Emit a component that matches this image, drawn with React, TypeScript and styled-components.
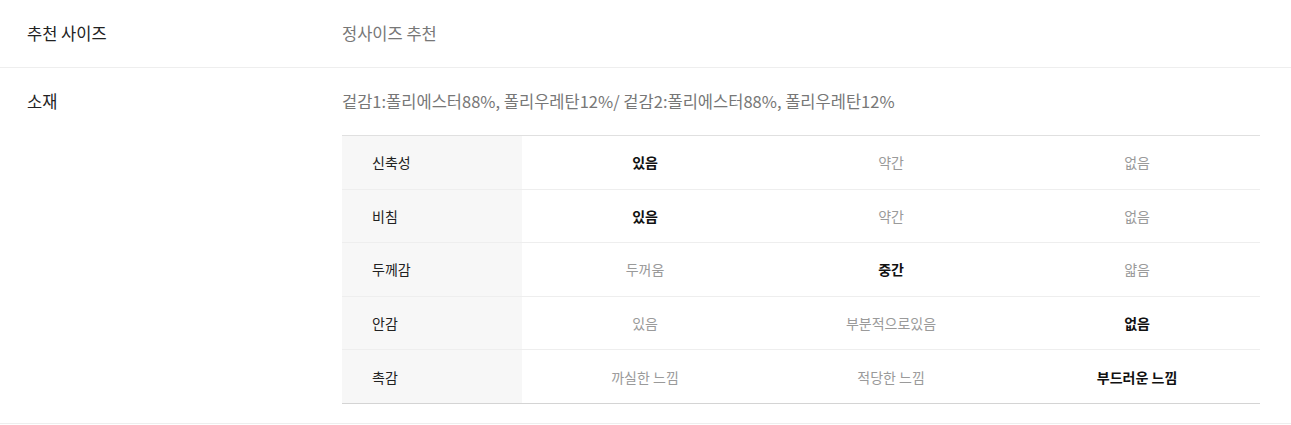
import styled, { createGlobalStyle } from "styled-components";

const GlobalStyle = createGlobalStyle`
  body {
    margin: 0;
    background: #ffffff;
    font-family: "Noto Sans CJK KR", "Noto Sans", sans-serif;
    color: #222222;
  }
`;

const Section = styled.div<{ $last?: boolean }>`
  display: flex;
  border-bottom: 1px solid #eeeeee;
  padding: 20px 0 ${(p) => (p.$last ? "19px" : "20px")} 27px;
`;

const Label = styled.div`
  width: 315px;
  flex-shrink: 0;
  font-size: 16.5px;
  line-height: 27px;
  color: #222222;
`;

const Content = styled.div`
  flex-grow: 1;
  padding-right: 31px;
`;

const Value = styled.div`
  font-size: 16.5px;
  line-height: 27px;
  color: #777777;
`;

const Table = styled.table`
  width: 100%;
  margin-top: 20px;
  table-layout: fixed;
  border-collapse: collapse;
  border-top: 1px solid #e0e0e0;
  border-bottom: 1px solid #d4d4d4;
  font-size: 14px;
`;

const Row = styled.tr`
  height: 53.6px;
  & + & {
    border-top: 1px solid #eeeeee;
  }
`;

const HeadCol = styled.col`
  width: 180px;
`;

const Head = styled.th`
  background: #f7f7f7;
  text-align: left;
  font-weight: 400;
  color: #222222;
  padding: 0 0 0 30px;
`;

const Cell = styled.td<{ $on?: boolean }>`
  text-align: center;
  color: ${(p) => (p.$on ? "#111111" : "#9a9a9a")};
  font-weight: ${(p) => (p.$on ? 700 : 400)};
`;

const rows = [
  { name: "신축성", options: ["있음", "약간", "없음"], pick: 0 },
  { name: "비침", options: ["있음", "약간", "없음"], pick: 0 },
  { name: "두께감", options: ["두꺼움", "중간", "얇음"], pick: 1 },
  { name: "안감", options: ["있음", "부분적으로있음", "없음"], pick: 2 },
  { name: "촉감", options: ["까실한 느낌", "적당한 느낌", "부드러운 느낌"], pick: 2 },
];

export default function App() {
  return (
    <>
      <GlobalStyle />
      <Section>
        <Label>추천 사이즈</Label>
        <Content>
          <Value>정사이즈 추천</Value>
        </Content>
      </Section>
      <Section $last>
        <Label>소재</Label>
        <Content>
          <Value>겉감1:폴리에스터88%, 폴리우레탄12%/ 겉감2:폴리에스터88%, 폴리우레탄12%</Value>
          <Table>
            <colgroup>
              <HeadCol />
              <col />
              <col />
              <col />
            </colgroup>
            <tbody>
              {rows.map((r) => (
                <Row key={r.name}>
                  <Head>{r.name}</Head>
                  {r.options.map((o, i) => (
                    <Cell key={o + i} $on={i === r.pick}>
                      {o}
                    </Cell>
                  ))}
                </Row>
              ))}
            </tbody>
          </Table>
        </Content>
      </Section>
    </>
  );
}
